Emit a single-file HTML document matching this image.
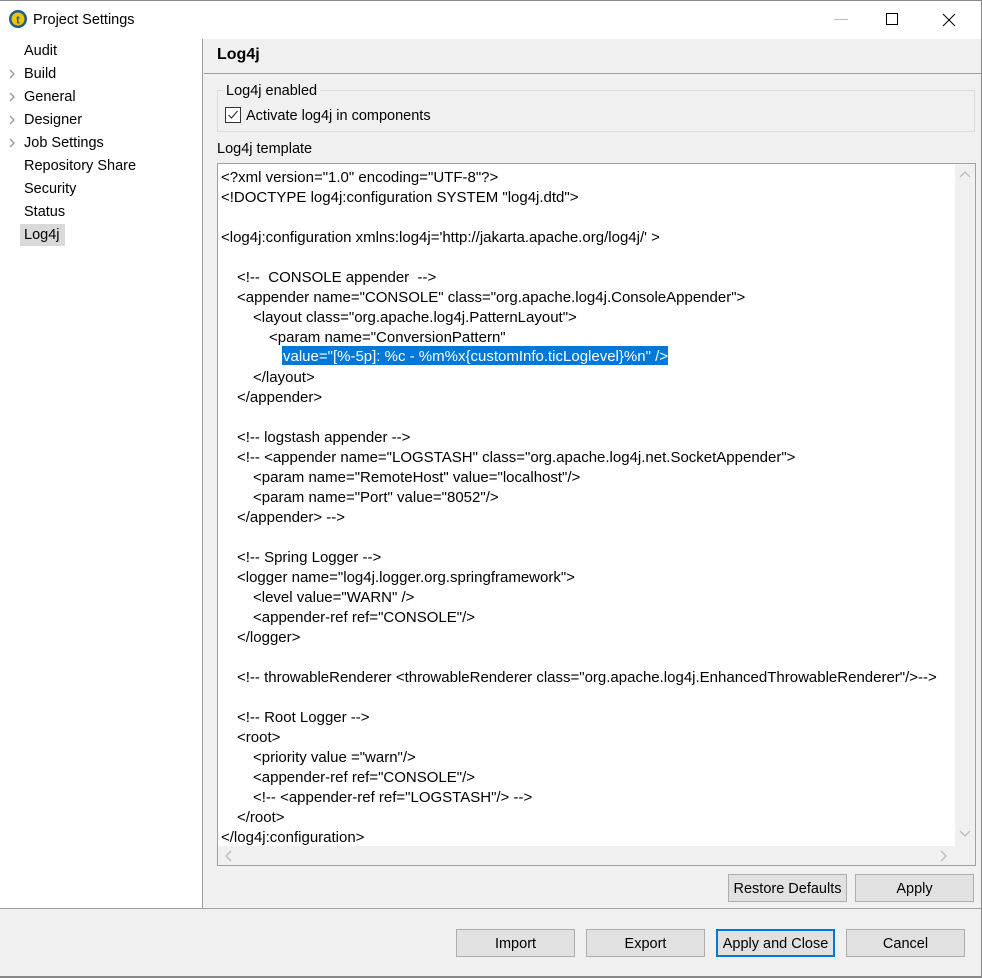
<!DOCTYPE html>
<html><head><meta charset="utf-8"><style>
*{margin:0;padding:0;box-sizing:border-box}
body{width:982px;height:978px;background:#f0f0f0;font-family:"Liberation Sans",sans-serif;font-size:14.5px;color:#000;position:relative;overflow:hidden}
.a{position:absolute;white-space:pre}
.t{margin-top:1px}
.btn{position:absolute;height:28px;width:119px;background:#e1e1e1;border:1px solid #adadad;text-align:center;line-height:28px;font-size:14.5px}
.l{position:absolute;white-space:pre;font-size:15px;line-height:20px;margin-top:2px}
</style></head><body>
<div class="a" style="left:0;top:0;width:982px;height:39px;background:#fff;border-top:1px solid #888;border-right:1px solid #888"></div>
<svg class="a" style="left:8px;top:9px" width="20" height="20"><circle cx="10" cy="10" r="9" fill="#1a5d8f"/><circle cx="10" cy="10" r="6.5" fill="#f2c200"/><text x="10" y="14.5" font-size="11" text-anchor="middle" font-family="Liberation Sans" fill="#1a5d8f" font-weight="bold">t</text></svg>
<div class="a t" style="left:33px;top:11px">Project Settings</div>
<div class="a" style="left:834px;top:19px;width:14px;height:1px;background:#bbb"></div>
<div class="a" style="left:886px;top:13px;width:12px;height:12px;border:1px solid #000"></div>
<svg class="a" style="left:942px;top:13px" width="14" height="14"><path d="M1 1L13 13M13 1L1 13" stroke="#000" stroke-width="1"/></svg>
<div class="a" style="left:981px;top:39px;width:1px;height:939px;background:#888"></div>
<div class="a" style="left:0;top:39px;width:203px;height:869px;background:#fff;border-right:1px solid #a0a0a0"></div>
<div class="a t" style="left:24px;top:42px">Audit</div>
<div class="a t" style="left:24px;top:65px">Build</div>
<div class="a t" style="left:24px;top:88px">General</div>
<div class="a t" style="left:24px;top:111px">Designer</div>
<div class="a t" style="left:24px;top:134px">Job Settings</div>
<div class="a t" style="left:24px;top:157px">Repository Share</div>
<div class="a t" style="left:24px;top:180px">Security</div>
<div class="a t" style="left:24px;top:203px">Status</div>
<div class="a" style="left:20px;top:224px;width:45px;height:22px;background:#d9d9d9"></div>
<div class="a t" style="left:24px;top:226px">Log4j</div>
<svg class="a" style="left:7px;top:69px" width="10" height="90"><g fill="none" stroke="#999" stroke-width="1.3"><path d="M3 1l4 4-4 4"/><path d="M3 24l4 4-4 4"/><path d="M3 47l4 4-4 4"/><path d="M3 70l4 4-4 4"/></g></svg>
<div class="a" style="left:217px;top:46px;font-weight:bold;font-size:16px">Log4j</div>
<div class="a" style="left:204px;top:73px;width:777px;height:1px;background:#a0a0a0"></div>
<div class="a" style="left:217px;top:90px;width:758px;height:42px;border:1px solid #dcdcdc"></div>
<div class="a t" style="left:223px;top:82px;background:#f0f0f0;padding:0 3px">Log4j enabled</div>
<div class="a" style="left:225px;top:107px;width:16px;height:16px;border:1px solid #333;background:#fff"></div>
<svg class="a" style="left:227px;top:109px" width="12" height="12"><path d="M1.5 6l3 3 6-7" fill="none" stroke="#333" stroke-width="1.2"/></svg>
<div class="a t" style="left:246px;top:107px">Activate log4j in components</div>
<div class="a t" style="left:217px;top:140px">Log4j template</div>
<div class="a" style="left:217px;top:163px;width:759px;height:703px;border:1px solid #a0a0a0;background:#fff"></div>
<div class="a" style="left:955px;top:164px;width:20px;height:682px;background:#f0f0f0"></div>
<div class="a" style="left:218px;top:846px;width:757px;height:19px;background:#f0f0f0"></div>
<svg class="a" style="left:958px;top:170px" width="14" height="10"><path d="M2 7l5-5 5 5" fill="none" stroke="#bbb" stroke-width="1.3"/></svg>
<svg class="a" style="left:958px;top:828px" width="14" height="10"><path d="M2 3l5 5 5-5" fill="none" stroke="#bbb" stroke-width="1.3"/></svg>
<svg class="a" style="left:224px;top:849px" width="10" height="14"><path d="M7 2l-5 5 5 5" fill="none" stroke="#bbb" stroke-width="1.3"/></svg>
<svg class="a" style="left:938px;top:849px" width="10" height="14"><path d="M3 2l5 5-5 5" fill="none" stroke="#bbb" stroke-width="1.3"/></svg>
<div class="a" style="left:282px;top:346px;width:386px;height:19px;background:#0078d7"></div>
<div class="l" style="left:221px;top:166px">&lt;?xml version="1.0" encoding="UTF-8"?&gt;</div>
<div class="l" style="left:221px;top:186px">&lt;!DOCTYPE log4j:configuration SYSTEM "log4j.dtd"&gt;</div>
<div class="l" style="left:221px;top:226px">&lt;log4j:configuration xmlns:log4j='http://jakarta.apache.org/log4j/' &gt;</div>
<div class="l" style="left:237px;top:266px">&lt;!--  CONSOLE appender  --&gt;</div>
<div class="l" style="left:237px;top:286px">&lt;appender name="CONSOLE" class="org.apache.log4j.ConsoleAppender"&gt;</div>
<div class="l" style="left:253px;top:306px">&lt;layout class="org.apache.log4j.PatternLayout"&gt;</div>
<div class="l" style="left:269px;top:326px">&lt;param name="ConversionPattern"</div>
<div class="l" style="left:283px;top:345px;color:#fff">value="[%-5p]: %c - %m%x{customInfo.ticLoglevel}%n" /&gt;</div>
<div class="l" style="left:253px;top:366px">&lt;/layout&gt;</div>
<div class="l" style="left:237px;top:386px">&lt;/appender&gt;</div>
<div class="l" style="left:237px;top:426px">&lt;!-- logstash appender --&gt;</div>
<div class="l" style="left:237px;top:446px">&lt;!-- &lt;appender name="LOGSTASH" class="org.apache.log4j.net.SocketAppender"&gt;</div>
<div class="l" style="left:253px;top:466px">&lt;param name="RemoteHost" value="localhost"/&gt;</div>
<div class="l" style="left:253px;top:486px">&lt;param name="Port" value="8052"/&gt;</div>
<div class="l" style="left:237px;top:506px">&lt;/appender&gt; --&gt;</div>
<div class="l" style="left:237px;top:546px">&lt;!-- Spring Logger --&gt;</div>
<div class="l" style="left:237px;top:566px">&lt;logger name="log4j.logger.org.springframework"&gt;</div>
<div class="l" style="left:253px;top:586px">&lt;level value="WARN" /&gt;</div>
<div class="l" style="left:253px;top:606px">&lt;appender-ref ref="CONSOLE"/&gt;</div>
<div class="l" style="left:237px;top:626px">&lt;/logger&gt;</div>
<div class="l" style="left:237px;top:666px">&lt;!-- throwableRenderer &lt;throwableRenderer class="org.apache.log4j.EnhancedThrowableRenderer"/&gt;--&gt;</div>
<div class="l" style="left:237px;top:706px">&lt;!-- Root Logger --&gt;</div>
<div class="l" style="left:237px;top:726px">&lt;root&gt;</div>
<div class="l" style="left:253px;top:746px">&lt;priority value ="warn"/&gt;</div>
<div class="l" style="left:253px;top:766px">&lt;appender-ref ref="CONSOLE"/&gt;</div>
<div class="l" style="left:253px;top:786px">&lt;!-- &lt;appender-ref ref="LOGSTASH"/&gt; --&gt;</div>
<div class="l" style="left:237px;top:806px">&lt;/root&gt;</div>
<div class="l" style="left:221px;top:826px">&lt;/log4j:configuration&gt;</div>
<div class="btn" style="left:728px;top:874px">Restore Defaults</div>
<div class="btn" style="left:855px;top:874px">Apply</div>
<div class="a" style="left:0;top:908px;width:981px;height:1px;background:#a0a0a0"></div>
<div class="btn" style="left:456px;top:929px">Import</div>
<div class="btn" style="left:586px;top:929px">Export</div>
<div class="btn" style="left:716px;top:929px;border:2px solid #0078d7;line-height:26px">Apply and Close</div>
<div class="btn" style="left:846px;top:929px">Cancel</div>
<div class="a" style="left:0;top:976px;width:982px;height:2px;background:#888"></div>
</body></html>
